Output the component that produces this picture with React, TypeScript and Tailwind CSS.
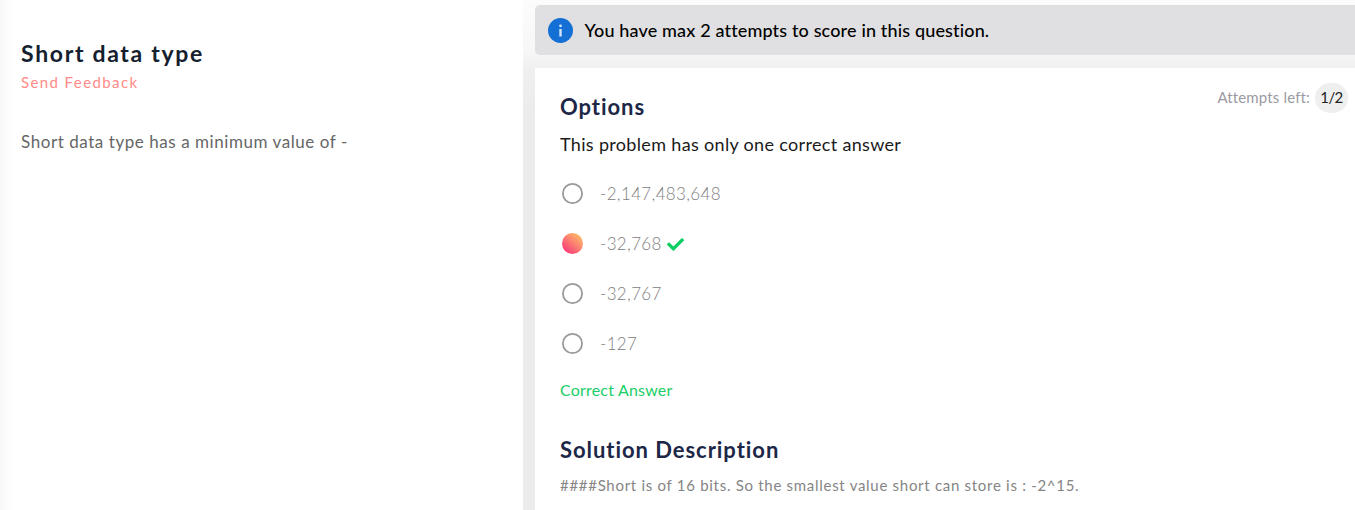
import React from 'react';
import { FaCheck } from 'react-icons/fa';

const options = [
  { text: '-2,147,483,648', selected: false },
  { text: '-32,768', selected: true },
  { text: '-32,767', selected: false },
  { text: '-127', selected: false },
];

function Radio({ selected }: { selected: boolean }) {
  return (
    <svg className="-mt-px ml-[2px] size-[21px] shrink-0" viewBox="0 0 21 21" fill="none">
      <defs>
        <linearGradient id="selectedFill" x1="0.15" y1="0.9" x2="0.85" y2="0.1">
          <stop stopColor="#fb3b7c" />
          <stop offset="1" stopColor="#fdbb68" />
        </linearGradient>
      </defs>
      {selected ? (
        <circle cx="10.5" cy="10.5" r="10.5" fill="url(#selectedFill)" />
      ) : (
        <circle cx="10.5" cy="10.5" r="9.6" stroke="#999" strokeWidth="1.8" />
      )}
    </svg>
  );
}

export default function App() {
  return (
    <div className="flex h-[510px] w-full overflow-hidden bg-white font-['Lato',sans-serif]">
      <main className="w-[523px] shrink-0 bg-gradient-to-r from-[#f8f8f8] to-white to-[14px] pt-[38px] pl-[21px]">
        <h1 className="text-[23px] leading-[30px] font-bold tracking-[1.68px] text-[#14202e]">Short data type</h1>
        <p className="mt-1 text-[15px] leading-5 tracking-[1.4px] text-[#ff8a87]">Send Feedback</p>
        <p className="mt-[38px] text-[17px] leading-6 tracking-[0.56px] text-[#666]">Short data type has a minimum value of -</p>
      </main>
      <section className="flex flex-1 flex-col overflow-hidden bg-[linear-gradient(to_bottom,#fcfcfc_0,#f7f7f7_50px,#efefef_72px,#ebebeb_120px)] pt-[5px] pl-3">
        <div className="flex h-[50px] shrink-0 items-center rounded-l-[5px] bg-[#e0e0e2] pl-[13px]">
          <svg className="-ml-[0.5px] size-[25px]" viewBox="0 0 25 25">
            <circle cx="12.5" cy="12.5" r="12.5" fill="#1470d4" />
            <circle cx="12.5" cy="7.8" r="1.4" fill="#d5e5f7" />
            <path d="M12.5 11v7.5" stroke="#d5e5f7" strokeWidth="2.4" />
          </svg>
          <span className="ml-3 text-[18px] font-medium tracking-[0.15px] text-black">You have max 2 attempts to score in this question.</span>
        </div>
        <div className="mt-[13px] flex-1 bg-white pl-[25px]">
          <div className="flex justify-between pt-[15px] pr-[7px]">
            <h2 className="pt-[10px] text-[22px] leading-7 font-bold tracking-[0.95px] text-[#1d2747]">Options</h2>
            <div className="flex h-[30px] items-center gap-[5px] text-[15px] tracking-[0.15px] text-[#9b9aa3]">
              <span className="-mt-px">Attempts left:</span>
              <span className="flex h-[30px] w-[33px] items-center justify-center rounded-full bg-[#efefef] pb-px tracking-[-0.6px] text-[#222]">1/2</span>
            </div>
          </div>
          <p className="mt-[11px] text-[18px] leading-6 tracking-[0.33px] text-[#1a1a1a]">This problem has only one correct answer</p>
          <div className="mt-[13px]">
            {options.map((option) => (
              <div key={option.text} className="flex h-[50px] items-center text-[17px] tracking-[0.35px] text-[#808080]">
                <Radio selected={option.selected} />
                <span className="ml-[17px] font-light">{option.text}</span>
                {option.selected && <FaCheck className="ml-[5px] text-[#0bcf61]" />}
              </div>
            ))}
          </div>
          <p className="mt-[9px] text-[16px] leading-6 tracking-[0.2px] text-[#1ace68]">Correct Answer</p>
          <h2 className="mt-[34px] text-[22px] leading-7 font-bold tracking-[0.95px] text-[#1d2747]">Solution Description</h2>
          <p className="mt-[9px] text-[15px] leading-6 tracking-[0.71px] text-[#858585]">####Short is of 16 bits. So the smallest value short can store is : -2^15.</p>
        </div>
      </section>
    </div>
  );
}
